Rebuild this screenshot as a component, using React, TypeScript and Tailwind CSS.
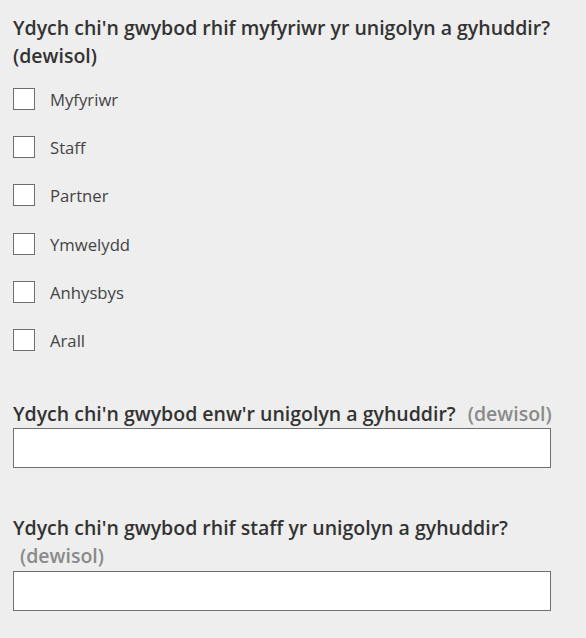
const OPTIONS = ["Myfyriwr", "Staff", "Partner", "Ymwelydd", "Anhysbys", "Arall"];

function Optional() {
  return <span className="pl-[7px] font-semibold text-[#8a8a8a]">(dewisol)</span>;
}

export default function App() {
  return (
    <div
      className="min-h-[638px] bg-[#eeeeee] pl-[13px] pt-[14px] text-[#333333]"
      style={{ fontFamily: '"Open Sans", "Liberation Sans", sans-serif' }}
    >
      <div className="w-[538px]">
        <h2 className="text-[19.5px] font-semibold leading-[28px]">
          Ydych chi'n gwybod rhif myfyriwr yr unigolyn a gyhuddir? (dewisol)
        </h2>

        <div className="mt-[18px] flex flex-col gap-[26.2px]">
          {OPTIONS.map((o) => (
            <label key={o} className="flex h-[22px] items-center">
              <span className="h-[22px] w-[22px] shrink-0 border border-[#6e6e6e] bg-white" />
              <span className="ml-[15px] mt-px text-[16.7px] text-[#444444]">{o}</span>
            </label>
          ))}
        </div>

        <h2 className="mt-[49px] whitespace-nowrap text-[19.5px] font-semibold leading-[28px]">
          Ydych chi'n gwybod enw'r unigolyn a gyhuddir? <Optional />
        </h2>
        <input
          type="text"
          className="block h-[40px] w-[538px] border border-[#707070] bg-white"
        />

        <h2 className="mt-[46px] text-[19.5px] font-semibold leading-[28px]">
          Ydych chi'n gwybod rhif staff yr unigolyn a gyhuddir? <Optional />
        </h2>
        <input
          type="text"
          className="mt-px block h-[40px] w-[538px] border border-[#707070] bg-white"
        />
      </div>
    </div>
  );
}
